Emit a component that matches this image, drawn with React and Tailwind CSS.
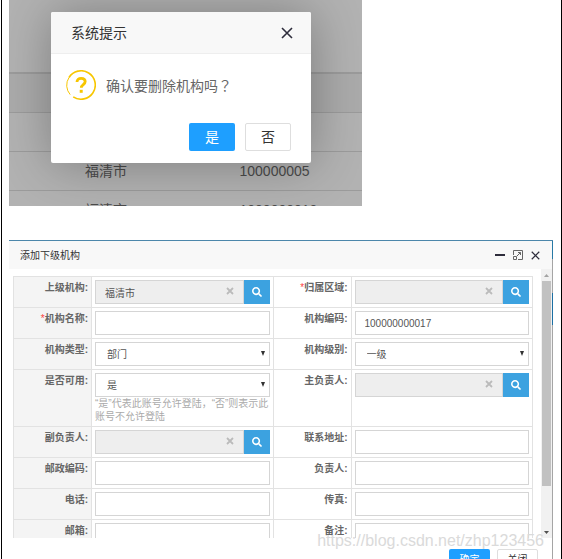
import React, { useState } from 'react';
import { FaSearch } from 'react-icons/fa';

const orgRows = [
    { name: '', code: '' },
    { name: '', code: '' },
    { name: '福清市', code: '100000005' },
    { name: '福清市', code: '1000000010' },
];

const formRows = [
    [
        { id: 'parent', label: '上级机构', type: 'lookup', value: '福清市' },
        { id: 'area', label: '归属区域', type: 'lookup', value: '', required: true },
    ],
    [
        { id: 'name', label: '机构名称', type: 'text', value: '', required: true },
        { id: 'code', label: '机构编码', type: 'text', value: '100000000017' },
    ],
    [
        { id: 'type', label: '机构类型', type: 'select', options: ['部门', '公司'] },
        { id: 'grade', label: '机构级别', type: 'select', options: ['一级', '二级'] },
    ],
    [
        { id: 'useable', label: '是否可用', type: 'select', options: ['是', '否'], help: true },
        { id: 'primary', label: '主负责人', type: 'lookup', value: '' },
    ],
    [
        { id: 'deputy', label: '副负责人', type: 'lookup', value: '' },
        { id: 'address', label: '联系地址', type: 'text', value: '' },
    ],
    [
        { id: 'zip', label: '邮政编码', type: 'text', value: '' },
        { id: 'master', label: '负责人', type: 'text', value: '' },
    ],
    [
        { id: 'phone', label: '电话', type: 'text', value: '' },
        { id: 'fax', label: '传真', type: 'text', value: '' },
    ],
    [
        { id: 'email', label: '邮箱', type: 'text', value: '' },
        { id: 'remarks', label: '备注', type: 'text', value: '' },
    ],
];

const CloseIcon = ({ className }) => (
    <svg viewBox="0 0 12 12" className={className} fill="none" stroke="#2e2d3c" strokeWidth="1.6">
        <path d="M1 1 11 11M11 1 1 11" />
    </svg>
);

const QuestionIcon = () => (
    <svg viewBox="0 0 30 30" className="size-[30px] shrink-0" fill="none" stroke="#f7c600">
        <path d="M4.2 24.6A14.2 14.2 0 0 1 3 7.5" strokeWidth="1" />
        <path d="M3 7.5A14.2 14.2 0 1 1 7.2 26.8" strokeWidth="1.6" />
        <path d="M11 12c0-2.500 1.700-3.700 4.100-3.700s4.100 1.200 4.100 3.300c0 3-3.900 3-3.900 6.200" strokeWidth="2.8" />
        <path d="M13.700 21.300h3" strokeWidth="3" />
    </svg>
);

const ConfirmDialog = () => (
    <div role="dialog" aria-label="系统提示" className="absolute top-3 left-[42px] w-[260px] rounded-xs bg-white shadow-[1px_1px_50px_rgba(0,0,0,0.3)]">
        <div className="flex h-[42px] items-center justify-between rounded-t-xs border-b border-[#eee] bg-[#f8f8f8] pr-[18px] pl-5">
            <h2 className="text-sm text-[#333]">系统提示</h2>
            <button type="button" aria-label="关闭" className="cursor-pointer">
                <CloseIcon className="size-3" />
            </button>
        </div>
        <div className="flex items-center gap-[10px] px-[15px] pt-4">
            <QuestionIcon />
            <p className="text-sm text-[#666]">
                确认要删除机构吗<span className="font-['Noto_Sans_CJK_TC',sans-serif]">？</span>
            </p>
        </div>
        <div className="flex justify-end gap-[10px] px-5 pt-[23px] pb-3">
            <button type="button" className="h-7 w-[46px] cursor-pointer rounded-xs bg-[#1e9fff] text-sm text-white">是</button>
            <button type="button" className="h-7 w-[46px] cursor-pointer rounded-xs border border-[#dedede] bg-white text-sm text-[#333]">否</button>
        </div>
    </div>
);

const OrgList = () => (
    <section className="relative h-[206px] w-full max-w-[353px] overflow-hidden bg-[#b2b2b2]">
        <table className="w-full table-fixed border-collapse text-sm text-[#4b4b4b]">
            <thead>
                <tr className="h-[73px] border-b-2 border-[#9b9b9b]">
                    <th></th>
                    <th></th>
                </tr>
            </thead>
            <tbody>
                {orgRows.map((row, index) => (
                    <tr key={index} className="h-[39px] border-b border-[#9b9b9b] first:bg-[#ababab]">
                        <td className="pl-[76px]">{row.name}</td>
                        <td className="pl-[54px]">{row.code}</td>
                    </tr>
                ))}
            </tbody>
        </table>
        <ConfirmDialog />
    </section>
);

const LookupField = ({ field }) => (
    <div className="relative flex">
        <input
            id={field.id}
            defaultValue={field.value}
            readOnly
            className="h-6 w-full min-w-0 border border-[#d5d5d5] bg-[#eee] pr-7 pl-[9px] text-[10px] text-[#555] outline-none"
        />
        <button type="button" aria-label="清除" className="absolute top-[7px] right-9 cursor-pointer">
            <svg viewBox="0 0 8 8" className="size-2" stroke="#bbb" strokeWidth="1.8">
                <path d="M1 1 7 7M7 1 1 7" />
            </svg>
        </button>
        <button type="button" aria-label="查询" className="flex h-6 w-[26px] shrink-0 cursor-pointer items-center justify-center bg-[#3ca2e0] text-[10px] text-white">
            <FaSearch />
        </button>
    </div>
);

const SelectField = ({ field }) => {
    const [value, setValue] = useState(field.options[0]);

    return (
        <div className="relative">
            <select
                id={field.id}
                value={value}
                onChange={(e) => setValue(e.target.value)}
                className="block h-6 w-full appearance-none border border-[#d5d5d5] bg-white pl-[11px] text-[10px] text-[#555] outline-none"
            >
                {field.options.map((option) => (
                    <option key={option}>{option}</option>
                ))}
            </select>
            <svg viewBox="0 0 4 5" className="pointer-events-none absolute top-[9px] right-[5px] h-[5px] w-1" fill="#333">
                <path d="M0 0h4L2 5z" />
            </svg>
        </div>
    );
};

const FormField = ({ field }) => {
    if (field.type === 'lookup') return <LookupField field={field} />;
    if (field.type === 'select') return <SelectField field={field} />;

    return (
        <input
            id={field.id}
            defaultValue={field.value}
            className="block h-6 w-full border border-[#d5d5d5] bg-white px-[9px] text-[10px] text-[#555] outline-none"
        />
    );
};

const OrgForm = () => (
    <table className="w-full table-fixed border-collapse">
        <colgroup>
            <col className="w-[78px]" />
            <col />
            <col className="w-[78px]" />
            <col />
        </colgroup>
        <tbody>
            {formRows.map((row) => (
                <tr key={row[0].id}>
                    {row.map((field) => (
                        <React.Fragment key={field.id}>
                            <th className="border border-[#e2e2e2] px-[3px] pt-1 text-right align-top text-[10px] leading-[14px] font-bold text-[#666] first:bg-[#f4f4f4]">
                                <label htmlFor={field.id}>
                                    {field.required && <span className="font-normal text-[#f44]">*</span>}
                                    {field.label}:
                                </label>
                            </th>
                            <td className="border border-[#e2e2e2] p-[3px] align-top">
                                <FormField field={field} />
                                {field.help && (
                                    <p className="h-[26px] text-[10px] leading-[13px] whitespace-nowrap text-[#aaa]">
                                        “是”代表此账号允许登陆，“否”则表示此
                                        <br />
                                        账号不允许登陆
                                    </p>
                                )}
                            </td>
                        </React.Fragment>
                    ))}
                </tr>
            ))}
        </tbody>
    </table>
);

const Scrollbar = () => (
    <div className="flex w-[11px] shrink-0 flex-col items-center bg-[#f1f1f1]">
        <svg viewBox="0 0 11 12" className="h-3 w-[11px]" fill="#a3a3a3">
            <path d="M3 8h5L5.500 5z" />
        </svg>
        <div className="h-[205px] w-[9px] bg-[#c1c1c1]"></div>
        <svg viewBox="0 0 11 12" className="mt-auto h-3 w-[11px]" fill="#505050">
            <path d="M3 5h5L5.500 8z" />
        </svg>
    </div>
);

const AddOrgWindow = () => (
    <section className="mt-[34px] flex border-t border-[#4c87ab]">
        <div className="min-w-0 flex-1 bg-white">
            <div className="flex h-7 items-center justify-between bg-[#f8f8f8] pr-3 pl-[11px]">
                <h2 className="text-[10px] text-[#333]">添加下级机构</h2>
                <div className="flex items-center gap-2">
                    <button type="button" aria-label="最小化" className="h-[2px] w-[10px] cursor-pointer bg-[#2e2d3c]"></button>
                    <button type="button" aria-label="最大化" className="cursor-pointer">
                        <svg viewBox="0 0 10 10" className="size-[10px]" fill="none" stroke="#666" strokeWidth="1">
                            <path d="M.5 5V.5h9v9H5M.5 6.500h3v3h-3zM4 6 7.500 2.500M5 2.500h2.500V5" />
                        </svg>
                    </button>
                    <button type="button" aria-label="关闭" className="cursor-pointer">
                        <CloseIcon className="size-[9px]" />
                    </button>
                </div>
            </div>
            <div className="flex h-[269px] overflow-hidden">
                <div className="min-w-0 flex-1 pt-[7px] pr-2 pl-1">
                    <OrgForm />
                </div>
                <Scrollbar />
            </div>
            <div className="flex justify-end gap-[7px] pt-[11px] pr-[14px]">
                <button type="button" className="h-5 w-[41px] cursor-pointer rounded-xs bg-[#1e9fff] text-[10px] text-white">确定</button>
                <button type="button" className="h-5 w-[41px] cursor-pointer rounded-xs border border-[#dedede] bg-white text-[10px] text-[#333]">关闭</button>
            </div>
        </div>
        {/* edge of the page behind the window */}
        <div className="flex w-px flex-col bg-[#a5a5a5]">
            <div className="h-[18px] bg-[#2779a5]"></div>
            <div className="mt-[34px] h-8 bg-[#1c6fa3]"></div>
        </div>
    </section>
);

const App = () => {
    return (
        <main className="relative ml-px h-screen overflow-hidden border-x border-black bg-white pr-2 pl-[7px] font-['Liberation_Sans','Noto_Sans_CJK_SC',sans-serif]">
            <OrgList />
            <AddOrgWindow />
            <span className="pointer-events-none absolute right-[17px] bottom-2 text-base leading-5 text-[#dadada]">
                https://blog.csdn.net/zhp123456
            </span>
        </main>
    );
};

export default App;
